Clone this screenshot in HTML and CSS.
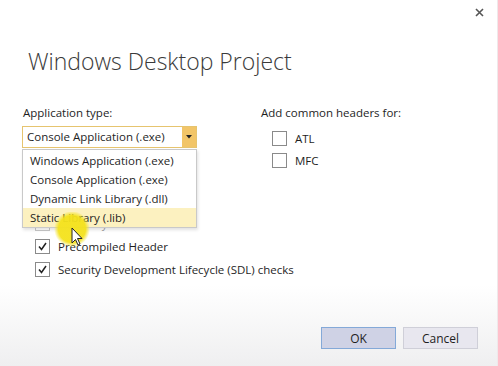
FILE: index.html
```html
<!DOCTYPE html>
<html lang="en">
<head>
    <meta charset="UTF-8">
    <title>Windows Desktop Project</title>
    <link rel="stylesheet" href="styles.css">
</head>
<body>

<div class="dialog">
    <div class="titlebar">
        <button class="close" aria-label="Close">
            <svg width="9" height="9" viewBox="0 0 9 9"><path d="M1 1L8 8M8 1L1 8" stroke="#555" stroke-width="1.6"/></svg>
        </button>
    </div>

    <h1 class="title">Windows Desktop Project</h1>

    <div class="columns">
        <div class="col-left">
            <div class="field-label">Application type:</div>
            <div class="combo">
                <div class="combo-box">
                    <span class="combo-value">Console Application (.exe)</span>
                    <span class="combo-arrow"><svg width="6" height="4" viewBox="0 0 6 4"><path d="M0 0H6L3 3.5Z" fill="#222"/></svg></span>
                </div>
                <ul class="combo-list">
                    <li>Windows Application (.exe)</li>
                    <li>Console Application (.exe)</li>
                    <li>Dynamic Link Library (.dll)</li>
                    <li class="hover">Static Library (.lib)</li>
                </ul>
            </div>

            <div class="options">
                <label class="check disabled"><span class="box"></span>Export symbols</label>
                <label class="check"><span class="box checked"><svg width="9" height="9" viewBox="0 0 9 9"><path d="M1 4.5L3.5 7.5L8 1" stroke="#222" stroke-width="1.5" fill="none"/></svg></span>Precompiled Header</label>
                <label class="check"><span class="box checked"><svg width="9" height="9" viewBox="0 0 9 9"><path d="M1 4.5L3.5 7.5L8 1" stroke="#222" stroke-width="1.5" fill="none"/></svg></span>Security Development Lifecycle (SDL) checks</label>
            </div>
        </div>

        <div class="col-right">
            <div class="field-label">Add common headers for:</div>
            <label class="check"><span class="box"></span>ATL</label>
            <label class="check"><span class="box"></span>MFC</label>
        </div>
    </div>

    <div class="footer">
        <button class="btn btn-ok">OK</button>
        <button class="btn">Cancel</button>
    </div>

    <!-- mouse pointer with the yellow click highlight -->
    <svg class="pointer" width="40" height="40" viewBox="0 0 40 40">
        <defs>
            <radialGradient id="glow">
                <stop offset="0.75" stop-color="#f4e21c" stop-opacity="0.95"/>
                <stop offset="1" stop-color="#f4e21c" stop-opacity="0"/>
            </radialGradient>
        </defs>
        <circle cx="18" cy="17" r="18" fill="url(#glow)"/>
        <path d="M18 16V31L21.5 27.5L24 33L26 32L23.5 26.5H28Z" fill="#fff" stroke="#222" stroke-width="1" stroke-linejoin="round"/>
    </svg>
</div>

</body>
</html>
```

FILE: styles.css
```css
body {
    margin: 0;
    font-family: 'Open Sans', 'Noto Sans', sans-serif;
    font-size: 11.5px;
    color: #1e1e1e;
    background: #fff;
}
.dialog {
    position: relative;
    width: 497px;
    height: 366px;
    border-right: 1px solid #f0e8ea;
    background: linear-gradient(to bottom, #fff 0, #fff 285px, #efeff0 366px);
    display: flex;
    flex-direction: column;
    overflow: hidden;
}
.titlebar {
    display: flex;
    justify-content: flex-end;
    height: 24px;
    padding: 0 7px 0 0;
}
.close {
    border: none;
    background: none;
    padding: 4px 6px;
    cursor: pointer;
}
.title {
    margin: 23px 0 0 28px;
    font-size: 23px;
    font-weight: 300;
    color: #3a3a3a;
    line-height: 28px;
}
.columns {
    display: grid;
    grid-template-columns: 238px 1fr;
    padding: 29px 0 0 22px;
}
.field-label {
    height: 18px;
    line-height: 18px;
    padding-left: 1px;
    white-space: nowrap;
}
.combo {
    position: relative;
    margin-top: 4px;
    width: 175px;
}
.combo-box {
    display: flex;
    height: 20px;
    border: 1px solid #e6c46f;
    background: #fff;
}
.combo-value {
    flex: 1;
    line-height: 20px;
    padding-left: 4px;
}
.combo-arrow {
    width: 14px;
    background: #f2c568;
    display: flex;
    align-items: center;
    justify-content: center;
}
.combo-list {
    position: absolute;
    top: 23px;
    left: 0;
    width: 173px;
    margin: 0;
    padding: 1px 0 0;
    list-style: none;
    background: #fff;
    border: 1px solid #c9c9c9;
    box-shadow: 1px 2px 3px rgba(0, 0, 0, 0.12);
    z-index: 2;
}
.combo-list li {
    height: 19px;
    line-height: 19px;
    padding-left: 7px;
}
.combo-list li.hover {
    background: #fcf1c0;
}
.options {
    margin-top: 64px;
}
.check {
    display: flex;
    align-items: center;
    height: 23px;
    padding-left: 13px;
    white-space: nowrap;
}
.box {
    flex: none;
    width: 13px;
    height: 13px;
    border: 1px solid #8a8a8a;
    margin-right: 8px;
    display: flex;
    align-items: center;
    justify-content: center;
    background: #fff;
}
.disabled {
    color: #a0a0a0;
}
.disabled .box {
    border-color: #c8c8c8;
}
.col-right .field-label {
    margin-bottom: 5px;
}
.col-right .check {
    height: 22px;
    padding-left: 12px;
}
.footer {
    margin-top: auto;
    display: flex;
    justify-content: flex-end;
    gap: 7px;
    padding: 0 19px 17px 0;
}
.btn {
    width: 75px;
    height: 22px;
    font-family: inherit;
    font-size: 12px;
    color: #1e1e1e;
    background: #e8e7ef;
    border: 1px solid #cfcfd8;
    cursor: pointer;
}
.btn-ok {
    background: #cfd2e5;
    border-color: #84a9d8;
}
.pointer {
    position: absolute;
    left: 54px;
    top: 212px;
    z-index: 3;
}
```
